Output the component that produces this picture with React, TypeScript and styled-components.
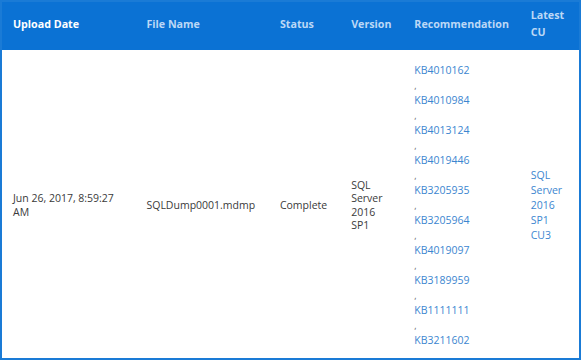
import React from "react";
import styled, { createGlobalStyle } from "styled-components";

const GlobalStyle = createGlobalStyle`
  html, body {
    margin: 0;
    padding: 0;
    background: #ffffff;
  }
  body {
    font-family: "Open Sans", "Noto Sans", "Liberation Sans", sans-serif;
  }
`;

const Table = styled.table`
  width: 581px;
  border-collapse: collapse;
  table-layout: fixed;
  border: 2px solid #1a7bd6;
  font-size: 10.5px;
  color: #3a3a3a;
`;

const HeadRow = styled.tr`
  background: #0b72d4;
  height: 49px;
`;

const HeadCell = styled.th<{ $active?: boolean }>`
  padding: 0 11px 4px;
  text-align: left;
  vertical-align: middle;
  font-weight: 700;
  font-size: 10.7px;
  line-height: 17px;
  color: ${(p) => (p.$active ? "#ffffff" : "#bcd8f6")};
`;

const Cell = styled.td`
  padding: 13px 11px 10px;
  vertical-align: middle;
  line-height: 13.5px;
`;

const LinkList = styled.div`
  display: flex;
  flex-direction: column;
  line-height: 15px;
`;

const KbLink = styled.a`
  color: #3c86d0;
  text-decoration: none;
`;

const Comma = styled.span`
  color: #666;
  font-size: 9px;
`;

const LinkText = styled.a`
  color: #3c86d0;
  text-decoration: none;
  line-height: 15px;
  display: block;
`;

const columns = [
  { label: "Upload Date", width: 134, active: true },
  { label: "File Name", width: 133 },
  { label: "Status", width: 71 },
  { label: "Version", width: 63 },
  { label: "Recommendation", width: 116 },
  { label: "Latest CU", width: 60 },
];

const kbs = [
  "KB4010162",
  "KB4010984",
  "KB4013124",
  "KB4019446",
  "KB3205935",
  "KB3205964",
  "KB4019097",
  "KB3189959",
  "KB1111111",
  "KB3211602",
];

export default function App() {
  return (
    <>
      <GlobalStyle />
      <Table>
        <colgroup>
          {columns.map((c) => (
            <col key={c.label} style={{ width: c.width }} />
          ))}
        </colgroup>
        <thead>
          <HeadRow>
            {columns.map((c) => (
              <HeadCell key={c.label} $active={c.active}>
                {c.label}
              </HeadCell>
            ))}
          </HeadRow>
        </thead>
        <tbody>
          <tr>
            <Cell>Jun 26, 2017, 8:59:27 AM</Cell>
            <Cell>SQLDump0001.mdmp</Cell>
            <Cell>Complete</Cell>
            <Cell>SQL Server 2016 SP1</Cell>
            <Cell>
              <LinkList>
                {kbs.map((kb, i) => (
                  <React.Fragment key={kb}>
                    <KbLink href="#">{kb}</KbLink>
                    {i < kbs.length - 1 && <Comma>,</Comma>}
                  </React.Fragment>
                ))}
              </LinkList>
            </Cell>
            <Cell>
              <LinkText href="#">SQL Server 2016 SP1 CU3</LinkText>
            </Cell>
          </tr>
        </tbody>
      </Table>
    </>
  );
}
